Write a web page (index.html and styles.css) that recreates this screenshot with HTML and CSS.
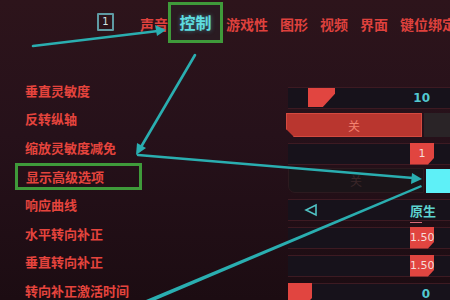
FILE: index.html
```html
<!DOCTYPE html>
<html lang="zh">
<head>
<meta charset="utf-8">
<link rel="stylesheet" href="styles.css">
</head>
<body>
<div class="page">
  <nav class="nav">
    <span class="key">1</span>
    <span class="tab">声音</span>
    <span class="tab active">控制</span>
    <span class="tab first">游戏性</span>
    <span class="tab">图形</span>
    <span class="tab">视频</span>
    <span class="tab">界面</span>
    <span class="tab">键位绑定</span>
  </nav>
  <div class="settings">
    <div class="labels">
      <div class="label">垂直灵敏度</div>
      <div class="label">反转纵轴</div>
      <div class="label">缩放灵敏度减免</div>
      <div class="label"><span class="boxed">显示高级选项</span></div>
      <div class="label">响应曲线</div>
      <div class="label">水平转向补正</div>
      <div class="label">垂直转向补正</div>
      <div class="label">转向补正激活时间</div>
    </div>
    <div class="controls">
      <div class="row">
        <div class="panel slider">
          <span class="thumb big" style="margin-left:20px"></span>
          <span class="value">10</span>
        </div>
      </div>
      <div class="row split">
        <div class="toggle">关</div>
        <div class="grey"></div>
      </div>
      <div class="row">
        <div class="panel slider end">
          <span class="thumb">1</span>
        </div>
      </div>
      <div class="row split">
        <div class="ghost">关</div>
        <div class="cyan"></div>
      </div>
      <div class="row">
        <div class="panel select">
          <svg class="prev" width="14" height="14" viewBox="0 0 14 14"><polygon points="12,2 12,12 2,7" fill="none" stroke="#4fc2c4" stroke-width="1.6"/></svg>
          <span class="option">原生</span>
        </div>
      </div>
      <div class="row">
        <div class="panel slider end">
          <span class="thumb">1.50</span>
        </div>
      </div>
      <div class="row">
        <div class="panel slider end">
          <span class="thumb">1.50</span>
        </div>
      </div>
      <div class="row">
        <div class="panel slider">
          <span class="thumb"></span>
          <span class="value">0</span>
        </div>
      </div>
    </div>
  </div>
  <svg class="arrows" width="450" height="300" viewBox="0 0 450 300">
    <g stroke="#2aaeb0" fill="#2aaeb0" stroke-linecap="round">
      <line x1="33" y1="46" x2="158" y2="31" stroke-width="2.6"/>
      <polygon points="166,30 155,25 157,36" stroke="none"/>
      <line x1="195" y1="55" x2="141" y2="147" stroke-width="2.6"/>
      <polygon points="136,155 137,143 146,148" stroke="none"/>
      <line x1="138" y1="155" x2="413" y2="178" stroke-width="2.4"/>
      <polygon points="422,179 412,173 411,184" stroke="none"/>
      <polygon points="421,185 422,187 151,302 146,300" stroke="none"/>
    </g>
  </svg>
</div>
</body>
</html>
```

FILE: styles.css
```css
* { box-sizing: border-box; }
html, body { margin: 0; padding: 0; }
body {
  width: 450px;
  height: 300px;
  overflow: hidden;
  background: linear-gradient(180deg, #2d141b 0%, #26111a 45%, #1c0c12 100%);
  font-family: "Noto Sans CJK SC", "Noto Sans", sans-serif;
}
.page {
  position: relative;
  width: 450px;
  height: 300px;
  overflow: hidden;
}
.nav {
  display: flex;
  align-items: center;
  height: 44px;
  padding: 3px 0 0 97px;
  white-space: nowrap;
}
.nav > * { flex-shrink: 0; }
.key {
  width: 17px;
  height: 18px;
  border: 2px solid #5e9aa3;
  border-radius: 1px;
  color: #cfe4e6;
  font-family: "DejaVu Sans", sans-serif;
  font-size: 10px;
  line-height: 14px;
  text-align: center;
  margin-right: 26px;
  margin-top: -3px;
}
.tab {
  color: #de413d;
  font-size: 14px;
  font-weight: 700;
  line-height: 18px;
  margin-right: 12px;
}
.tab:nth-child(2) { margin-right: 0; }
.tab.active {
  height: 41px;
  width: 55px;
  border: 3px solid #3f9a3a;
  background: #2a1b22;
  color: #5fdde0;
  font-size: 16px;
  font-weight: 700;
  display: flex;
  align-items: center;
  justify-content: center;
  margin-right: 3px;
  margin-top: -3px;
  text-shadow: 0 0 4px rgba(80, 220, 230, 0.5);
}
.settings {
  display: flex;
  margin-top: 32px;
}
.labels {
  width: 286px;
  display: flex;
  flex-direction: column;
  padding-top: 0;
}
.label {
  height: 28.6px;
  display: flex;
  align-items: center;
  padding-left: 25px;
  color: #e5443d;
  font-size: 13px;
  font-weight: 700;
  white-space: nowrap;
}
.boxed {
  display: inline-flex;
  align-items: center;
  height: 27px;
  width: 127px;
  margin-left: -10px;
  padding-left: 8px;
  border: 3px solid #3f9a3a;
}
.controls {
  flex: 1;
  display: flex;
  flex-direction: column;
  padding-top: 11px;
}
.row {
  height: 28px;
  display: flex;
}
.panel {
  height: 22px;
  width: 100%;
  margin-left: 2px;
  background: #17121b;
  border-top: 1px solid #3d1a22;
  border-bottom: 1px solid #3d1a22;
  display: flex;
  align-items: center;
  position: relative;
}
.slider.end { justify-content: flex-end; padding-right: 16px; }
.thumb {
  width: 24px;
  height: 22px;
  background: #e14540;
  clip-path: polygon(0 0, 100% 0, 100% 70%, 75% 100%, 0 100%);
  color: #f6dcd8;
  font-family: "DejaVu Sans", sans-serif;
  font-size: 11px;
  line-height: 22px;
  text-align: center;
  white-space: nowrap;
  overflow: visible;
  margin-top: -1px;
}
.thumb.big {
  width: 27px;
  height: 19px;
  clip-path: polygon(0 0, 100% 0, 100% 30%, 55% 100%, 0 100%);
}
.value {
  margin-left: auto;
  margin-right: 20px;
  color: #52c9d0;
  font-family: "DejaVu Sans", sans-serif;
  font-size: 12px;
  font-weight: 700;
}
.split { gap: 2px; }
.toggle {
  width: 136px;
  height: 24px;
  margin-top: -2px;
  background: #b9362f;
  border: 1px solid #d44a40;
  clip-path: polygon(0 0, 100% 0, 100% 100%, 8px 100%, 0 calc(100% - 8px));
  color: #f4826f;
  font-size: 12px;
  display: flex;
  align-items: center;
  justify-content: center;
}
.grey {
  flex: 1;
  height: 24px;
  margin-top: -2px;
  background: #2a2427;
}
.ghost {
  width: 136px;
  height: 25px;
  margin-left: 2px;
  margin-top: -3px;
  background: #1b1418;
  border: 1px solid #2c1a1f;
  border-radius: 0 0 0 7px;
  color: #3a2628;
  font-size: 12px;
  display: flex;
  align-items: center;
  justify-content: center;
}
.cyan {
  flex: 1;
  height: 24px;
  margin-top: -2px;
  background: #5ef0f7;
}
.select { justify-content: space-between; padding: 0 14px 0 16px; }
.prev { display: block; }
.option {
  position: relative;
  color: #5dd3cf;
  font-size: 13px;
  font-weight: 700;
}
.option::after {
  content: "";
  position: absolute;
  left: 0;
  bottom: -3px;
  width: 12px;
  height: 1px;
  background: #d86a78;
}
.arrows {
  position: absolute;
  left: 0;
  top: 0;
  pointer-events: none;
}
```
